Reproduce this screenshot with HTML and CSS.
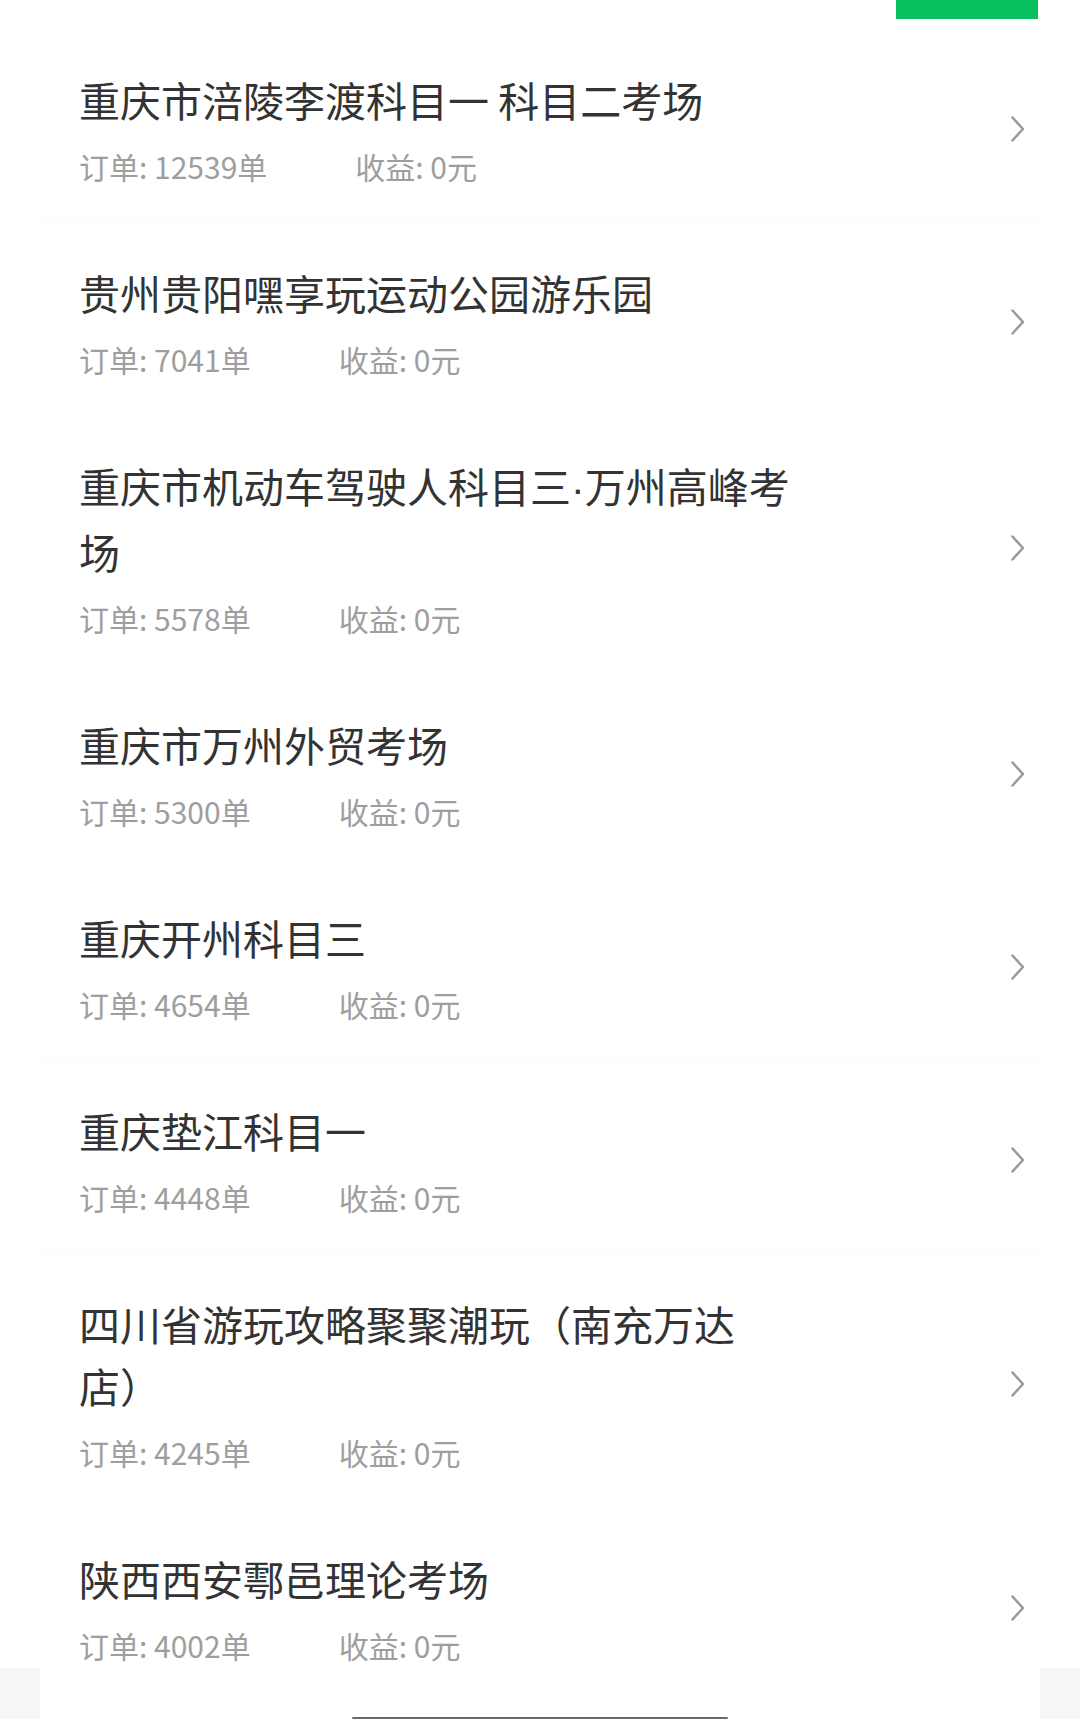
FILE: index.html
```html
<!DOCTYPE html>
<html lang="zh-CN">
<head>
<meta charset="utf-8">
<title>考场列表</title>
<link rel="stylesheet" href="styles.css">
</head>
<body>
<div class="page">
  <div class="topbar"><div class="green-btn"></div></div>
  <ul class="list">
    <li class="card">
      <div class="info">
        <div class="title">重庆市涪陵李渡科目一 科目二考场</div>
        <div class="meta"><span class="orders">订单: 12539单</span><span class="income">收益: 0元</span></div>
      </div>
      <svg class="chev" viewBox="0 0 16 28" width="16" height="28"><path d="M2.5 2.5 L13 14 L2.5 25.5" fill="none" stroke="#9a9a9a" stroke-width="2.5" stroke-linecap="round" stroke-linejoin="round"/></svg>
    </li>
    <li class="card">
      <div class="info">
        <div class="title">贵州贵阳嘿享玩运动公园游乐园</div>
        <div class="meta"><span class="orders">订单: 7041单</span><span class="income">收益: 0元</span></div>
      </div>
      <svg class="chev" viewBox="0 0 16 28" width="16" height="28"><path d="M2.5 2.5 L13 14 L2.5 25.5" fill="none" stroke="#9a9a9a" stroke-width="2.5" stroke-linecap="round" stroke-linejoin="round"/></svg>
    </li>
    <li class="card">
      <div class="info">
        <div class="title">重庆市机动车驾驶人科目三<span class="dot">·</span>万州高峰考场</div>
        <div class="meta"><span class="orders">订单: 5578单</span><span class="income">收益: 0元</span></div>
      </div>
      <svg class="chev" viewBox="0 0 16 28" width="16" height="28"><path d="M2.5 2.5 L13 14 L2.5 25.5" fill="none" stroke="#9a9a9a" stroke-width="2.5" stroke-linecap="round" stroke-linejoin="round"/></svg>
    </li>
    <li class="card">
      <div class="info">
        <div class="title">重庆市万州外贸考场</div>
        <div class="meta"><span class="orders">订单: 5300单</span><span class="income">收益: 0元</span></div>
      </div>
      <svg class="chev" viewBox="0 0 16 28" width="16" height="28"><path d="M2.5 2.5 L13 14 L2.5 25.5" fill="none" stroke="#9a9a9a" stroke-width="2.5" stroke-linecap="round" stroke-linejoin="round"/></svg>
    </li>
    <li class="card">
      <div class="info">
        <div class="title">重庆开州科目三</div>
        <div class="meta"><span class="orders">订单: 4654单</span><span class="income">收益: 0元</span></div>
      </div>
      <svg class="chev" viewBox="0 0 16 28" width="16" height="28"><path d="M2.5 2.5 L13 14 L2.5 25.5" fill="none" stroke="#9a9a9a" stroke-width="2.5" stroke-linecap="round" stroke-linejoin="round"/></svg>
    </li>
    <li class="card">
      <div class="info">
        <div class="title">重庆垫江科目一</div>
        <div class="meta"><span class="orders">订单: 4448单</span><span class="income">收益: 0元</span></div>
      </div>
      <svg class="chev" viewBox="0 0 16 28" width="16" height="28"><path d="M2.5 2.5 L13 14 L2.5 25.5" fill="none" stroke="#9a9a9a" stroke-width="2.5" stroke-linecap="round" stroke-linejoin="round"/></svg>
    </li>
    <li class="card">
      <div class="info">
        <div class="title">四川省游玩攻略聚聚潮玩（南充万达店）</div>
        <div class="meta"><span class="orders">订单: 4245单</span><span class="income">收益: 0元</span></div>
      </div>
      <svg class="chev" viewBox="0 0 16 28" width="16" height="28"><path d="M2.5 2.5 L13 14 L2.5 25.5" fill="none" stroke="#9a9a9a" stroke-width="2.5" stroke-linecap="round" stroke-linejoin="round"/></svg>
    </li>
    <li class="card last">
      <div class="info">
        <div class="title">陕西西安鄠邑理论考场</div>
        <div class="meta"><span class="orders">订单: 4002单</span><span class="income">收益: 0元</span></div>
      </div>
      <svg class="chev" viewBox="0 0 16 28" width="16" height="28"><path d="M2.5 2.5 L13 14 L2.5 25.5" fill="none" stroke="#9a9a9a" stroke-width="2.5" stroke-linecap="round" stroke-linejoin="round"/></svg>
    </li>
  </ul>
  <div class="tail">
    <div class="tail-inner"><div class="home-bar"></div></div>
  </div>
</div>
</body>
</html>
```

FILE: styles.css
```css
html, body {
  margin: 0;
  padding: 0;
  background: #ffffff;
}
body {
  font-family: "Noto Sans CJK SC", "Noto Sans", sans-serif;
  width: 1080px;
  height: 1719px;
  overflow: hidden;
}
.page {
  display: flex;
  flex-direction: column;
  height: 1719px;
}
.topbar {
  height: 19px;
  display: flex;
  justify-content: flex-end;
  padding-right: 42px;
  margin-bottom: 12px;
}
.green-btn {
  width: 142px;
  height: 19px;
  background: #07c160;
}
.list {
  list-style: none;
  margin: 0;
  padding: 0;
}
.card {
  margin: 0 40px 6px 40px;
  background: #ffffff;
  box-shadow: 0 0 3px rgba(0, 0, 0, 0.025);
  display: flex;
  align-items: center;
  padding: 37px 0 32px 39px;
}
.card.last {
  padding-bottom: 3px;
  margin-bottom: 0;
  box-shadow: none;
}
.info {
  flex: 1;
}
.title {
  max-width: 712px;
  font-size: 41px;
  line-height: 62px;
  color: #333333;
}
.dot {
  font-family: "Liberation Sans", sans-serif;
}
.meta {
  margin-top: 16px;
  font-size: 30px;
  line-height: 40px;
  color: #9e9e9e;
}
.income {
  margin-left: 88px;
}
.chev {
  flex: none;
  margin: 4px 14px 0 0;
}
.tail {
  flex: 1;
  background: #f6f6f6;
  display: flex;
  justify-content: center;
}
.tail-inner {
  width: 1000px;
  background: #ffffff;
  display: flex;
  align-items: flex-end;
  justify-content: center;
}
.home-bar {
  width: 376px;
  height: 2px;
  background: #6a6a6a;
  border-radius: 1px;
}
```
